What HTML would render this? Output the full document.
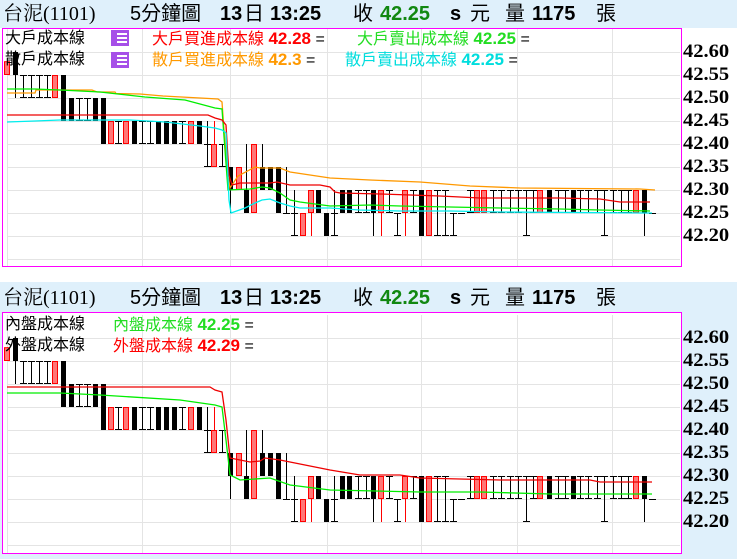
<!DOCTYPE html>
<html><head><meta charset="utf-8"><style>
body{margin:0;width:737px;height:559px;background:#dff0fb;position:relative;overflow:hidden;font-family:"Liberation Sans","Noto Sans CJK TC",sans-serif}
.hdr{position:absolute;left:0;height:28px;width:737px;font-size:20px;line-height:28px;white-space:nowrap}
.hdr span{position:absolute;top:0}
.ser{font-family:"Liberation Serif","Noto Serif CJK SC",serif}
.b{font-weight:bold}
.lg{position:absolute;font-size:16px;line-height:20px;white-space:nowrap;font-family:"Liberation Sans","WenQuanYi Zen Hei",sans-serif}
.lg b{font-size:17px}
.ic{position:absolute;width:18px;height:16px;background:#a64fe8}
.ic i{position:absolute;left:6px;height:2px;width:10px;background:#fff}
.ax{position:absolute;left:683px;font:bold 19px "Liberation Serif",serif;line-height:20px;transform:scaleX(1.08);transform-origin:left}
</style></head><body>
<div style="position:absolute;left:0;top:28px;width:737px;height:254px;background:#fff"></div>
<div class="hdr" style="top:0"><span class="ser" style="left:3px">台泥(1101)</span><span style="left:130px">5分鐘圖</span><span class="b" style="left:220px">13</span><span style="left:244px">日</span><span class="b" style="left:270px">13:25</span><span style="left:353px">收</span><b style="position:absolute;left:380px;color:#118811">42.25</b><b style="position:absolute;left:450px">s</b><span style="left:470px">元</span><span style="left:505px">量</span><b style="position:absolute;left:532px">1175</b><span style="left:596px">張</span></div>
<div class="hdr" style="top:284px"><span class="ser" style="left:3px">台泥(1101)</span><span style="left:130px">5分鐘圖</span><span class="b" style="left:220px">13</span><span style="left:244px">日</span><span class="b" style="left:270px">13:25</span><span style="left:353px">收</span><b style="position:absolute;left:380px;color:#118811">42.25</b><b style="position:absolute;left:450px">s</b><span style="left:470px">元</span><span style="left:505px">量</span><b style="position:absolute;left:532px">1175</b><span style="left:596px">張</span></div>
<svg id="s" width="737" height="559" style="position:absolute;left:0;top:0"></svg>
<div class="lg" style="left:5px;top:29px">大戶成本線</div>
<div class="lg" style="left:5px;top:50px">散戶成本線</div>
<div class="ic" style="left:111px;top:30px"><i style="top:3px"></i><i style="top:7px"></i><i style="top:11px"></i></div>
<div class="ic" style="left:111px;top:52px"><i style="top:3px"></i><i style="top:7px"></i><i style="top:11px"></i></div>
<div class="lg" style="left:152px;top:29px;color:#f00">大戶買進成本線 <b>42.28</b> <span style="color:#000">=</span></div>
<div class="lg" style="left:357px;top:29px;color:#2d2">大戶賣出成本線 <b>42.25</b> <span style="color:#000">=</span></div>
<div class="lg" style="left:152px;top:50px;color:#f90">散戶買進成本線 <b>42.3</b> <span style="color:#000">=</span></div>
<div class="lg" style="left:345px;top:50px;color:#0dd">散戶賣出成本線 <b>42.25</b> <span style="color:#000">=</span></div>
<div class="lg" style="left:5px;top:315px">內盤成本線</div>
<div class="lg" style="left:5px;top:336px">外盤成本線</div>
<div class="lg" style="left:113px;top:315px;color:#2d2">內盤成本線 <b>42.25</b> <span style="color:#000">=</span></div>
<div class="lg" style="left:113px;top:336px;color:#f00">外盤成本線 <b>42.29</b> <span style="color:#000">=</span></div>
<div id="ax"></div>
<script>
var s=document.getElementById('s'),h='';
h+='<rect x="2.5" y="28.5" width="679" height="238" fill="#fff" stroke="#f0f" />';
h+='<rect x="2.5" y="312.5" width="679" height="241" fill="#fff" stroke="#f0f" />';
function grid(dy,b){for(var k=0;k<10;k++){var y=52+23*k+dy;if(y<b)h+='<line x1="7" x2="680" y1="'+(y+.5)+'" y2="'+(y+.5)+'" stroke="#e4e4e4"/>';}
[7,142,230,327,421,517,612].forEach(function(x){h+='<line x1="'+(x+.5)+'" x2="'+(x+.5)+'" y1="'+(29+dy)+'" y2="'+(b)+'" stroke="#e4e4e4"/>';});}
grid(0,266);grid(286,553);
function Y(p){return 52+(42.60-p)*460;}
var C=[[7,'r',42.58,42.55,42.58,42.55],[15,'b',42.6,42.55,42.6,42.5],[23,'t',42.55,42.55,42.55,42.5],[31,'t',42.55,42.55,42.55,42.5],[39,'t',42.55,42.55,42.55,42.5],[47,'t',42.55,42.55,42.55,42.5],[55,'r',42.55,42.5,42.55,42.5],[63,'b',42.55,42.45,42.55,42.45],[71,'b',42.5,42.45,42.5,42.45],[79,'t',42.5,42.5,42.5,42.45],[87,'t',42.5,42.5,42.5,42.45],[95,'b',42.5,42.45,42.5,42.45],[103,'b',42.5,42.4,42.5,42.4],[111,'r',42.45,42.4,42.45,42.4],[118,'t',42.45,42.45,42.45,42.4],[126,'r',42.45,42.4,42.45,42.4],[134,'b',42.45,42.4,42.45,42.4],[142,'t',42.45,42.45,42.45,42.4],[150,'t',42.45,42.45,42.45,42.4],[158,'b',42.45,42.4,42.45,42.4],[166,'b',42.45,42.4,42.45,42.4],[174,'b',42.45,42.4,42.45,42.4],[182,'t',42.45,42.45,42.45,42.4],[191,'r',42.45,42.4,42.45,42.4],[199,'b',42.45,42.4,42.45,42.4],[207,'t',42.4,42.4,42.45,42.35],[214,'r',42.4,42.35,42.45,42.35],[222,'t',42.4,42.4,42.4,42.35],[230,'b',42.35,42.3,42.35,42.25],[239,'r',42.35,42.3,42.35,42.3],[246,'b',42.3,42.25,42.4,42.25],[254,'r',42.4,42.25,42.4,42.25],[262,'b',42.35,42.3,42.4,42.3],[270,'b',42.35,42.3,42.35,42.3],[278,'b',42.35,42.25,42.35,42.25],[286,'t',42.25,42.25,42.35,42.25],[294,'t',42.25,42.25,42.3,42.2],[303,'r',42.25,42.2,42.25,42.2],[311,'r',42.3,42.25,42.3,42.2],[318,'b',42.3,42.25,42.3,42.25],[326,'b',42.25,42.2,42.25,42.2],[334,'t',42.25,42.25,42.3,42.2],[342,'b',42.3,42.25,42.3,42.25],[349,'b',42.3,42.25,42.3,42.25],[358,'t',42.3,42.3,42.3,42.25],[366,'t',42.3,42.3,42.3,42.25],[373,'b',42.3,42.25,42.3,42.2],[381,'r',42.3,42.25,42.3,42.2],[389,'t',42.3,42.3,42.3,42.25],[397,'t',42.25,42.25,42.25,42.2],[405,'r',42.3,42.25,42.3,42.2],[413,'t',42.3,42.3,42.3,42.25],[421,'b',42.3,42.2,42.3,42.2],[429,'r',42.3,42.2,42.3,42.2],[437,'t',42.3,42.3,42.3,42.2],[445,'t',42.3,42.3,42.3,42.2],[453,'t',42.25,42.25,42.25,42.2],[461,'t',42.25,42.25,42.25,42.25],[470,'t',42.3,42.3,42.3,42.25],[477,'r',42.3,42.25,42.3,42.25],[484,'r',42.3,42.25,42.3,42.25],[493,'t',42.3,42.3,42.3,42.25],[501,'t',42.3,42.3,42.3,42.25],[510,'t',42.3,42.3,42.3,42.25],[518,'t',42.3,42.3,42.3,42.25],[526,'t',42.3,42.3,42.3,42.2],[533,'t',42.3,42.3,42.3,42.25],[540,'r',42.3,42.25,42.3,42.25],[549,'b',42.3,42.25,42.3,42.25],[558,'t',42.3,42.3,42.3,42.25],[565,'t',42.3,42.3,42.3,42.25],[573,'b',42.3,42.25,42.3,42.25],[580,'t',42.3,42.3,42.3,42.25],[588,'t',42.3,42.3,42.3,42.25],[597,'t',42.3,42.3,42.3,42.25],[604,'t',42.3,42.3,42.3,42.2],[613,'t',42.3,42.3,42.3,42.25],[621,'t',42.3,42.3,42.3,42.25],[628,'t',42.3,42.3,42.3,42.25],[636,'r',42.3,42.25,42.3,42.25],[644,'b',42.3,42.25,42.3,42.2],[652,'t',42.25,42.25,42.25,42.25]];
function candles(dy){C.forEach(function(c){var x=c[0],col=c[1]=='r'?'#f00':'#000';
h+='<line x1="'+(x+.5)+'" x2="'+(x+.5)+'" y1="'+(Y(c[4])+dy)+'" y2="'+(Y(c[5])+dy)+'" stroke="'+col+'"/>';
if(c[1]=='t'){var y=Y(c[2])+dy+.5;h+='<line x1="'+(x-3)+'" x2="'+(x+4)+'" y1="'+y+'" y2="'+y+'" stroke="#000"/>';if(c[5]<c[2]){var y2=Y(c[5])+dy-.5;h+='<line x1="'+(x-3)+'" x2="'+(x+4)+'" y1="'+y2+'" y2="'+y2+'" stroke="#000"/>';}}
else{var t=Y(c[2])+dy,b=Y(c[3])+dy;if(c[1]=='r')h+='<rect x="'+(x-2.5)+'" y="'+(t+.5)+'" width="5" height="'+(b-t-1)+'" fill="#f77" stroke="#f00"/>';else h+='<rect x="'+(x-2)+'" y="'+t+'" width="5" height="'+(b-t)+'" fill="#000"/>';}});}
candles(0);candles(286);
function pl(p,col,dy){h+='<polyline fill="none" stroke="'+col+'" stroke-width="1.3" points="'+p.map(function(q){return q[0]+','+(q[1]+dy);}).join(' ')+'"/>';}
pl([[7,93],[35,93],[36,90],[92,90],[97,92],[115,92],[116,93.5],[140,94],[163,96],[200,98],[218,99],[222,102],[224,130],[228,175],[230,188],[238,176],[255,167],[260,168],[280,168],[290,172],[330,178],[370,180],[420,182],[470,186],[520,188],[640,189],[655,190]],'#f90',0);
pl([[7,89],[35,89],[60,90],[100,92],[145,97],[185,100],[200,104],[215,108],[222,109],[225,150],[228,190],[250,189],[262,187],[270,188],[280,193],[290,200],[300,202],[330,206],[370,205],[400,206],[450,207],[500,208],[560,209],[600,210],[650,211]],'#0e0',0);
pl([[7,115],[208,115],[215,118],[222,120],[226,125],[229,175],[232,185],[240,183],[270,183],[277,182],[290,185],[320,185],[330,187],[335,192],[340,193],[380,194],[440,196],[480,198],[560,198],[600,199],[620,202],[650,202]],'#e00',0);
pl([[7,122],[35,121],[60,120],[130,120],[165,122],[200,126],[215,128],[222,130],[226,133],[229,200],[231,213],[245,208],[255,203],[262,200],[270,199],[280,203],[290,206],[300,208],[330,208],[360,210],[400,211],[450,211],[500,212],[652,213]],'#0ee',0);
pl([[7,387],[210,387],[215,390],[222,392],[226,420],[230,458],[240,460],[250,462],[260,461],[265,458],[280,460],[290,462],[330,470],[360,475],[400,475],[420,478],[500,480],[590,480],[600,482],[652,482]],'#e00',0);
pl([[7,393],[60,393],[100,395],[180,400],[215,405],[222,407],[226,440],[230,475],[240,480],[270,478],[290,485],[330,490],[420,492],[480,492],[550,494],[652,494]],'#0e0',0);
h+='<rect x="682" y="313" width="55" height="246" fill="#dff0fb"/>';
s.innerHTML=h;
var a='',l=['42.60','42.55','42.50','42.45','42.40','42.35','42.30','42.25','42.20'];
l.forEach(function(t,i){a+='<div class="ax" style="top:'+(42+23*i)+'px">'+t+'</div><div class="ax" style="top:'+(328+23*i)+'px">'+t+'</div>';});
document.getElementById('ax').innerHTML=a;
</script>
</body></html>
